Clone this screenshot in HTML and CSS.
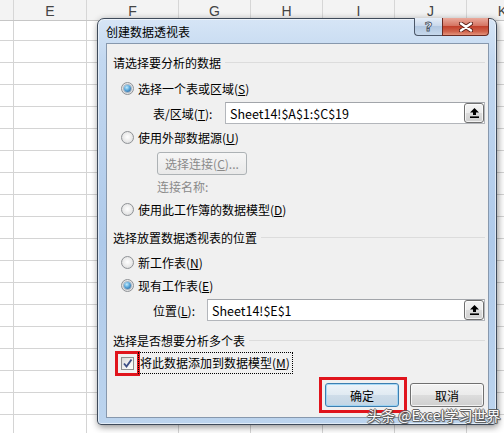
FILE: index.html
```html
<!DOCTYPE html>
<html lang="zh-CN">
<head>
<meta charset="utf-8">
<title>创建数据透视表</title>
<link rel="stylesheet" href="styles.css">
</head>
<body>
<div class="sheet">
  <div class="col-heads">
    <div class="ch c0"></div>
    <div class="ch c1">E</div>
    <div class="ch c2">F</div>
    <div class="ch c3">G</div>
    <div class="ch c3">H</div>
    <div class="ch c3">I</div>
    <div class="ch c3">J</div>
    <div class="ch c4">K</div>
  </div>
  <div class="cells">
    <div class="col c0"></div>
    <div class="col c1"></div>
    <div class="col c2"></div>
    <div class="col c3"></div>
    <div class="col c3"></div>
    <div class="col c3"></div>
    <div class="col c3"></div>
    <div class="col c4"></div>
  </div>
</div>

<div class="dialog">
  <div class="titlebar">
    <span class="title">创建数据透视表</span>
    <div class="caption-btns">
      <span class="cbtn help">?</span>
      <span class="cbtn close">
        <svg width="14" height="10" viewBox="0 0 14 10">
          <path d="M2 1.5 L12 8.5 M12 1.5 L2 8.5" stroke="#5a2018" stroke-width="4.2" stroke-linecap="round"/>
          <path d="M2 1.5 L12 8.5 M12 1.5 L2 8.5" stroke="#ffffff" stroke-width="2.4" stroke-linecap="round"/>
        </svg>
      </span>
    </div>
  </div>
  <div class="client">
    <div class="group-head">请选择要分析的数据</div>
    <div class="radio-row m6"><span class="radio checked"></span><span>选择一个表或区域(<u>S</u>)</span></div>
    <div class="field-row m4">
      <span class="flabel fl-table">表/区域(<u>T</u>):</span>
      <div class="input">
        <span class="input-text">Sheet14!$A$1:$C$19</span>
        <span class="pick">
          <svg width="9" height="10" viewBox="0 0 9 10"><path d="M4.5 0 L9 4.5 H6 V7 H3 V4.5 H0 Z" fill="#000"/><rect x="0" y="8.4" width="9" height="1.6" fill="#000"/></svg>
        </span>
      </div>
    </div>
    <div class="radio-row m3"><span class="radio"></span><span>使用外部数据源(<u>U</u>)</span></div>
    <div class="conn-btn">选择连接(<u>C</u>)...</div>
    <div class="conn-name">连接名称:</div>
    <div class="radio-row m2"><span class="radio"></span><span>使用此工作簿的数据模型(<u>D</u>)</span></div>

    <div class="group-head m8">选择放置数据透视表的位置</div>
    <div class="radio-row m5"><span class="radio"></span><span>新工作表(<u>N</u>)</span></div>
    <div class="radio-row m3"><span class="radio checked"></span><span>现有工作表(<u>E</u>)</span></div>
    <div class="field-row m4">
      <span class="flabel fl-loc">位置(<u>L</u>):</span>
      <div class="input">
        <span class="input-text">Sheet14!$E$1</span>
        <span class="pick">
          <svg width="9" height="10" viewBox="0 0 9 10"><path d="M4.5 0 L9 4.5 H6 V7 H3 V4.5 H0 Z" fill="#000"/><rect x="0" y="8.4" width="9" height="1.6" fill="#000"/></svg>
        </span>
      </div>
    </div>

    <div class="group-head m9">选择是否想要分析多个表</div>
    <div class="check-row">
      <span class="checkbox">
        <svg width="11" height="11" viewBox="0 0 11 11"><path d="M2 5.5 L4.5 8.5 L9.5 1.5" fill="none" stroke="#3d4f86" stroke-width="1.9"/></svg>
      </span>
      <span class="focus-label">将此数据添加到数据模型(<u>M</u>)</span>
    </div>

    <div class="btn-row">
      <div class="btn default">确定</div>
      <div class="btn">取消</div>
    </div>
  </div>
</div>

<div class="watermark">头条 @Excel学习世界</div>
</body>
</html>
```

FILE: styles.css
```css
* { box-sizing: border-box; }

html, body { margin: 0; padding: 0; }

body {
  width: 504px;
  height: 433px;
  overflow: hidden;
  position: relative;
  background: #ffffff;
  font-family: "Noto Sans CJK SC", "Noto Sans", sans-serif;
  font-size: 12px;
  color: #000;
}

/* ---------- spreadsheet background ---------- */
.sheet { width: 504px; height: 433px; }

.col-heads {
  display: flex;
  height: 21px;
  background: #f3f3f3;
  border-bottom: 1px solid #c6c6c6;
}

.ch {
  flex: none;
  height: 20px;
  padding-top: 2px;
  border-right: 1px solid #d6d6d6;
  font-family: "Liberation Sans", sans-serif;
  font-size: 14px;
  line-height: 18px;
  color: #444;
  text-align: center;
  overflow: hidden;
}

.c0 { width: 14px; }
.c1 { width: 73px; }
.c2 { width: 92px; }
.c3 { width: 72px; }
.c4 { width: 72px; }

.cells { display: flex; height: 412px; }

.col {
  flex: none;
  height: 100%;
  border-right: 1px solid #d4d4d4;
  background-image: repeating-linear-gradient(to bottom, transparent 0 21px, #d4d4d4 21px 22px);
  background-position: 0 -2px;
}

/* ---------- dialog window ---------- */
.dialog {
  position: absolute;
  left: 97px;
  top: 18px;
  width: 400px;
  height: 407px;
  display: flex;
  flex-direction: column;
  border: 1px solid #3e4a5a;
  border-radius: 7px 7px 4px 4px;
  background: linear-gradient(to bottom, #d6e5f6 0%, #c3d8f0 10%, #afcaea 55%, #bcd4ee 100%);
  box-shadow: 1px 2px 7px rgba(0, 0, 0, 0.45), inset 0 0 0 1px rgba(255, 255, 255, 0.55);
}

.titlebar {
  flex: none;
  height: 24px;
  display: flex;
  align-items: center;
  padding-left: 8px;
}

.title { font-size: 12px; color: #000; }

.caption-btns {
  margin-left: auto;
  margin-right: 7px;
  align-self: flex-start;
  margin-top: -1px;
  display: flex;
  height: 18px;
}

.cbtn {
  display: flex;
  align-items: center;
  justify-content: center;
  height: 18px;
  border: 1px solid #4b5769;
  border-top: none;
}

.help {
  width: 28px;
  border-right: none;
  border-radius: 0 0 0 4px;
  background: linear-gradient(to bottom, #e6eef8 0%, #cad9ec 45%, #b3c8e1 50%, #c6d8ec 100%);
  font-family: "DejaVu Sans", sans-serif;
  font-weight: bold;
  font-size: 13px;
  line-height: 16px;
  color: #ffffff;
  -webkit-text-stroke: 0.9px #4a5566;
}

.close {
  width: 47px;
  border-color: #6a2a22;
  border-radius: 0 0 4px 0;
  background: linear-gradient(to bottom, #eaaa9c 0%, #d57563 45%, #c2412c 50%, #d0644d 80%, #e3937c 100%);
}

.client {
  flex: 1;
  margin: 0 7px 6px 8px;
  background: #f0f0f0;
  border: 1px solid #8798ad;
  display: flex;
  flex-direction: column;
  padding-top: 8px;
}

.group-head {
  display: flex;
  align-items: center;
  height: 20px;
  margin-left: 6px;
  margin-right: 3px;
  white-space: nowrap;
}

.group-head::after {
  content: "";
  flex: 1;
  height: 1px;
  background: #dcdcdc;
  margin-left: 4px;
}

.m2 { margin-top: 2px; }
.m3 { margin-top: 3px; }
.m4 { margin-top: 4px; }
.m5 { margin-top: 5px; }
.m6 { margin-top: 6px; }
.m8 { margin-top: 8px; }
.m9 { margin-top: 9px; }

.radio-row {
  display: flex;
  align-items: center;
  gap: 4px;
  height: 20px;
  padding-left: 14px;
  white-space: nowrap;
}

.radio {
  flex: none;
  width: 13px;
  height: 13px;
  border-radius: 50%;
  border: 1px solid #8f9296;
  background: radial-gradient(circle at 50% 45%, #ffffff 0%, #e9e9e9 55%, #cfd0d2 100%);
  display: flex;
  align-items: center;
  justify-content: center;
}

.radio.checked::after {
  content: "";
  width: 7px;
  height: 7px;
  border-radius: 50%;
  background: radial-gradient(circle at 40% 35%, #c4ecfc 0%, #5aa8dc 45%, #1b4f86 100%);
  box-shadow: 0 0 0 1px rgba(40, 80, 120, 0.35);
}

.field-row {
  display: flex;
  align-items: center;
  height: 22px;
  padding-left: 46px;
  margin-right: 3px;
}

.flabel { flex: none; white-space: nowrap; }
.fl-table { width: 72px; }
.fl-loc { width: 54px; }

.input {
  flex: 1;
  height: 22px;
  display: flex;
  align-items: center;
  background: #ffffff;
  border: 1px solid #b3b6bb;
  border-top-color: #a2a5aa;
  padding-left: 4px;
}

.input-text {
  flex: 1;
  font-size: 12.5px;
  white-space: nowrap;
}

.pick {
  flex: none;
  width: 20px;
  height: 20px;
  display: flex;
  align-items: center;
  justify-content: center;
  border: 1px solid #707070;
  border-radius: 3px;
  background: linear-gradient(to bottom, #f4f4f4 0%, #ececec 50%, #dcdcdc 50%, #d0d0d0 100%);
  box-shadow: inset 0 0 0 1px rgba(255, 255, 255, 0.7);
}

.conn-btn {
  margin-top: 5px;
  margin-left: 50px;
  width: 90px;
  height: 23px;
  display: flex;
  align-items: center;
  justify-content: center;
  border: 1px solid #adb2b5;
  border-radius: 3px;
  background: linear-gradient(to bottom, #f6f6f6, #e9e9e9);
  color: #8a8a8a;
  white-space: nowrap;
}

.conn-name {
  margin-top: 2px;
  margin-left: 50px;
  height: 20px;
  line-height: 20px;
  color: #8a8a8a;
}

.check-row {
  margin-top: 2px;
  display: flex;
  align-items: center;
  gap: 4px;
  height: 22px;
  padding-left: 14px;
}

.checkbox {
  flex: none;
  width: 13px;
  height: 13px;
  border: 1px solid #8e8f8f;
  background: linear-gradient(135deg, #d9d9d9 0%, #f4f4f4 60%, #ffffff 100%);
  display: flex;
  align-items: center;
  justify-content: center;
  outline: 3px solid #e0141c;
  outline-offset: 3px;
}

.focus-label {
  height: 22px;
  line-height: 20px;
  padding: 0 2px 0 1px;
  border: 1px dotted #000;
  white-space: nowrap;
}

.btn-row {
  margin-top: 9px;
  display: flex;
  justify-content: flex-end;
  gap: 11px;
  padding-right: 4px;
}

.btn {
  position: relative;
  width: 74px;
  height: 24px;
  display: flex;
  align-items: center;
  justify-content: center;
  border: 1px solid #707070;
  border-radius: 3px;
  background: linear-gradient(to bottom, #f3f3f3 0%, #ebebeb 50%, #dddddd 50%, #cfcfcf 100%);
  box-shadow: inset 0 0 0 1px rgba(255, 255, 255, 0.75);
}

.btn.default {
  border-color: #3c7fb1;
  background: linear-gradient(to bottom, #eef4f9 0%, #e0eaf2 50%, #cfdde9 50%, #c2d5e5 100%);
  box-shadow: inset 0 0 0 1px rgba(150, 210, 245, 0.8);
}

.btn.default::after {
  content: "";
  position: absolute;
  left: -7px;
  right: -9px;
  top: -7px;
  bottom: -7px;
  border: 3px solid #e0141c;
}

/* ---------- watermark ---------- */
.watermark {
  position: absolute;
  left: 367px;
  top: 405px;
  font-size: 14px;
  line-height: 20px;
  color: #ffffff;
  white-space: nowrap;
  text-shadow: 1px 0 0 #555, -1px 0 0 #555, 0 1px 0 #555, 0 -1px 0 #555, 1px 1px 1px #333;
  opacity: 0.9;
}
```
